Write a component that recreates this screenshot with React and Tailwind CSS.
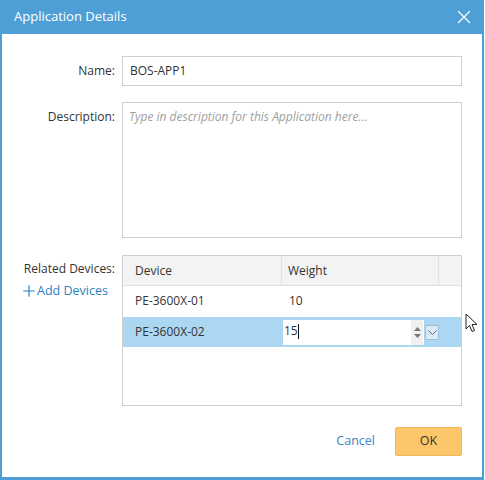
import { X, Plus } from 'lucide-react';

const ROWS = [
  { device: 'PE-3600X-01', weight: '10' },
  { device: 'PE-3600X-02', weight: '15', editing: true },
];

function Cursor() {
  return (
    <svg className="absolute left-[465px] top-[313px]" width="14" height="20" viewBox="0 0 14 20">
      <path d="M1 1 L1 16 L4.5 12.5 L7 18.5 L9.5 17.5 L7 11.5 L12 11.5 Z" fill="#fff" stroke="#222" strokeWidth="1" strokeLinejoin="miter" />
    </svg>
  );
}

function WeightEditor({ value }) {
  return (
    <div className="flex items-center h-full">
      <div className="flex items-center w-[155px] h-[25px] bg-white ml-px">
        <span className="flex-1 pl-[1px] leading-none">
          {value}
          <span className="inline-block w-px h-[15px] bg-[#111] align-middle -mt-[2px]" />
        </span>
        <div className="w-[12px] h-full bg-[#f0f0f0] flex flex-col items-center justify-center gap-[3px] mr-px">
          <svg width="7" height="4" viewBox="0 0 7 4"><path d="M0 4 L3.5 0 L7 4 Z" fill="#777" /></svg>
          <svg width="7" height="4" viewBox="0 0 7 4"><path d="M0 0 L3.5 4 L7 0 Z" fill="#777" /></svg>
        </div>
      </div>
      <div className="ml-px w-[15px] h-[15px] bg-[#dde9f6] border border-[#9fbddf] flex items-center justify-center">
        <svg width="9" height="5" viewBox="0 0 9 5">
          <path d="M0.5 0.5 L4.5 4.5 L8.5 0.5" fill="none" stroke="#4a6f9a" strokeWidth="1" />
        </svg>
      </div>
    </div>
  );
}

export default function App() {
  return (
    <div className="relative w-[485px] h-[480px] bg-white text-[12px] text-[#333] font-['Open_Sans',sans-serif]">
      <div className="w-[484px] h-[480px] border-x-2 border-b-[3px] border-[#4e9fd5] flex flex-col">
        {/* Title bar */}
        <div className="h-[34px] -mx-[2px] bg-[#4e9fd5] flex items-center justify-between pl-[14px] pr-[9px] text-white">
          <span className="text-[13px]">Application Details</span>
          <X className="w-[22px] h-[22px]" strokeWidth={1.3} />
        </div>

        {/* Body */}
        <div className="flex-1 pt-[22px] pr-[20px] grid grid-cols-[113px_1fr] gap-x-[7px] content-start">
          <label className="text-right self-center">Name:</label>
          <div className="h-[30px] border border-[#cfcfcf] flex items-center px-[7px]">BOS-APP1</div>

          <label className="text-right pt-[6px] mt-[16px]">Description:</label>
          <div className="mt-[16px] h-[136px] border border-[#cfcfcf] px-[6px] pt-[5px] italic text-[#a0a0a0]">
            Type in description for this Application here...
          </div>

          <div className="mt-[17px] pt-[5px] flex flex-col">
            <span className="text-right">Related Devices:</span>
            <span className="pl-[18px] mt-[4px] flex items-center text-[#2a7fc0] text-[12.5px]">
              <Plus className="w-[18px] h-[18px] -mr-[1px]" strokeWidth={1.6} />
              Add Devices
            </span>
          </div>
          <div className="mt-[17px] h-[151px] border border-[#cfcfcf]">
            <div className="h-[30px] bg-[#f3f3f3] border-b border-[#e0e0e0] grid grid-cols-[159px_157px_1fr]">
              <div className="pl-[12px] flex items-center border-r border-[#e0e0e0]">Device</div>
              <div className="pl-[6px] flex items-center border-r border-[#e0e0e0]">Weight</div>
              <div />
            </div>
            {ROWS.map((row) => (
              <div
                key={row.device}
                className={`h-[30px] grid grid-cols-[159px_157px_1fr] ${row.editing ? 'bg-[#acd7f2] mt-px' : ''}`}
              >
                <div className="pl-[12px] flex items-center">{row.device}</div>
                {row.editing ? (
                  <WeightEditor value={row.weight} />
                ) : (
                  <div className="pl-[7px] flex items-center">{row.weight}</div>
                )}
                <div />
              </div>
            ))}
          </div>

          <div />
          <div className="mt-[21px] flex items-center justify-end">
            <span className="text-[#3a86bd] text-[12.5px] mr-[20px]">Cancel</span>
            <button type="button" className="w-[67px] h-[29px] bg-[#fcc66b] border border-[#f0b657] rounded-[2px] text-[#333] text-[12.5px]">
              OK
            </button>
          </div>
        </div>
      </div>
      <Cursor />
    </div>
  );
}
